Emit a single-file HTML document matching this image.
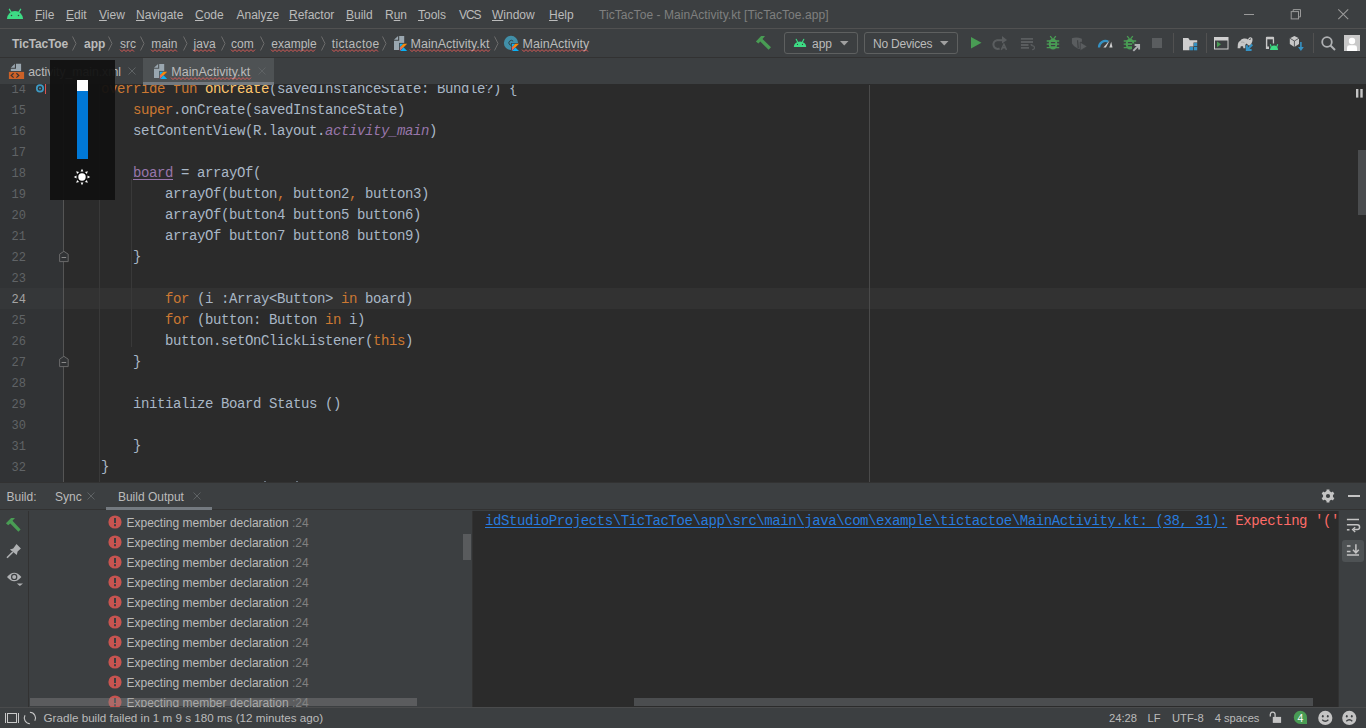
<!DOCTYPE html><html><head><meta charset="utf-8"><style>
*{margin:0;padding:0;box-sizing:border-box}
html,body{width:1366px;height:728px;overflow:hidden;background:#3c3f41;font-family:"Liberation Sans",sans-serif;font-size:12px;color:#bbbbbb}
.a{position:absolute;white-space:nowrap}
.m{position:absolute;white-space:pre;font-family:"Liberation Mono",monospace;font-size:14px;letter-spacing:-0.4px;line-height:21px;color:#a9b7c6}
.u{text-decoration:underline;text-underline-offset:1px}
.w{text-decoration:underline wavy #bc3f3c;text-decoration-thickness:1px;text-underline-offset:2px;text-decoration-skip-ink:none}
.kw{color:#cc7832}.fn{color:#ffc66d}.pr{color:#9876aa}
.ln{position:absolute;left:0;width:26px;text-align:right;font-family:"Liberation Mono",monospace;font-size:12px;line-height:21px;color:#606366}
.chev{position:absolute;top:37px}
svg{position:absolute;overflow:visible}
</style></head><body>
<div class="a" style="left:0;top:0;width:1366px;height:28px;background:#3c3f41"></div>
<div class="a" style="left:0;top:28px;width:1366px;height:1px;background:#515151"></div>
<svg style="left:0px;top:0px" width="30" height="28"><path d="M6.9 19 A8.1 7.9 0 0 1 23.1 19 Z" fill="#3ddc84"/><path d="M9.4 9.3 L11.2 12.4 M20.6 9.3 L18.8 12.4" stroke="#3ddc84" stroke-width="1.3" stroke-linecap="round"/><circle cx="11.5" cy="15.4" r="0.75" fill="#3c3f41"/><circle cx="18.5" cy="15.4" r="0.75" fill="#3c3f41"/></svg>
<div class="a" style="left:35px;top:1px;line-height:29px;"><span class="u">F</span>ile</div>
<div class="a" style="left:66px;top:1px;line-height:29px;"><span class="u">E</span>dit</div>
<div class="a" style="left:99px;top:1px;line-height:29px;"><span class="u">V</span>iew</div>
<div class="a" style="left:136px;top:1px;line-height:29px;"><span class="u">N</span>avigate</div>
<div class="a" style="left:195px;top:1px;line-height:29px;"><span class="u">C</span>ode</div>
<div class="a" style="left:236.5px;top:1px;line-height:29px;">Analy<span class="u">z</span>e</div>
<div class="a" style="left:289px;top:1px;line-height:29px;"><span class="u">R</span>efactor</div>
<div class="a" style="left:346px;top:1px;line-height:29px;"><span class="u">B</span>uild</div>
<div class="a" style="left:385px;top:1px;line-height:29px;">R<span class="u">u</span>n</div>
<div class="a" style="left:418px;top:1px;line-height:29px;"><span class="u">T</span>ools</div>
<div class="a" style="left:459px;top:1px;line-height:29px;letter-spacing:-1.1px;">VCS</div>
<div class="a" style="left:492px;top:1px;line-height:29px;"><span class="u">W</span>indow</div>
<div class="a" style="left:549px;top:1px;line-height:29px;"><span class="u">H</span>elp</div>
<div class="a" style="left:599px;top:1px;line-height:29px;color:#7f7f7f;letter-spacing:0.06px">TicTacToe - MainActivity.kt [TicTacToe.app]</div>
<div class="a" style="left:1244px;top:14px;width:10px;height:1px;background:#9a9a9a"></div>
<svg style="left:1290px;top:9px" width="12" height="11"><rect x="1.2" y="2.6" width="7.3" height="7.3" fill="none" stroke="#9a9a9a"/><path d="M3.2 2.6 V0.6 H10.5 V7.9 H8.5" fill="none" stroke="#9a9a9a"/></svg>
<svg style="left:1338px;top:9px" width="11" height="11"><path d="M0.3 0.3 L10.2 10.2 M10.2 0.3 L0.3 10.2" stroke="#9a9a9a" stroke-width="1.05"/></svg>
<div class="a" style="left:0;top:29px;width:1366px;height:28px;background:#3c3f41"></div>
<div class="a" style="left:0;top:57px;width:1366px;height:1px;background:#323232"></div>
<div class="a" style="left:12px;top:30px;line-height:29px;font-weight:bold;letter-spacing:-0.15px;">TicTacToe</div>
<div class="a" style="left:84px;top:30px;line-height:29px;font-weight:bold;">app</div>
<div class="a" style="left:120px;top:30px;line-height:29px;">src</div>
<div class="a" style="left:151.3px;top:30px;line-height:29px;">main</div>
<div class="a" style="left:193.6px;top:30px;line-height:29px;">java</div>
<div class="a" style="left:231px;top:30px;line-height:29px;">com</div>
<div class="a" style="left:271.3px;top:30px;line-height:29px;">example</div>
<div class="a" style="left:331.8px;top:30px;line-height:29px;letter-spacing:0.35px;">tictactoe</div>
<svg style="left:72px;top:36px" width="5" height="15"><path d="M0.5 0.5 L4 7.5 L0.5 14.5" fill="none" stroke="#6b6b6b" stroke-width="1"/></svg>
<svg style="left:108px;top:36px" width="5" height="15"><path d="M0.5 0.5 L4 7.5 L0.5 14.5" fill="none" stroke="#6b6b6b" stroke-width="1"/></svg>
<svg style="left:139.5px;top:36px" width="5" height="15"><path d="M0.5 0.5 L4 7.5 L0.5 14.5" fill="none" stroke="#6b6b6b" stroke-width="1"/></svg>
<svg style="left:182.5px;top:36px" width="5" height="15"><path d="M0.5 0.5 L4 7.5 L0.5 14.5" fill="none" stroke="#6b6b6b" stroke-width="1"/></svg>
<svg style="left:220.5px;top:36px" width="5" height="15"><path d="M0.5 0.5 L4 7.5 L0.5 14.5" fill="none" stroke="#6b6b6b" stroke-width="1"/></svg>
<svg style="left:259.5px;top:36px" width="5" height="15"><path d="M0.5 0.5 L4 7.5 L0.5 14.5" fill="none" stroke="#6b6b6b" stroke-width="1"/></svg>
<svg style="left:320.5px;top:36px" width="5" height="15"><path d="M0.5 0.5 L4 7.5 L0.5 14.5" fill="none" stroke="#6b6b6b" stroke-width="1"/></svg>
<svg style="left:381.5px;top:36px" width="5" height="15"><path d="M0.5 0.5 L4 7.5 L0.5 14.5" fill="none" stroke="#6b6b6b" stroke-width="1"/></svg>
<svg style="left:120px;top:48.5px" width="15.0" height="4"><polyline points="0.0 0.6 2.0 2.6 4.0 0.6 6.0 2.6 8.0 0.6 10.0 2.6 12.0 0.6 14.0 2.6" fill="none" stroke="#d95b58" stroke-width="1"/></svg>
<svg style="left:151px;top:48.5px" width="27.0" height="4"><polyline points="0.0 0.6 2.0 2.6 4.0 0.6 6.0 2.6 8.0 0.6 10.0 2.6 12.0 0.6 14.0 2.6 16.0 0.6 18.0 2.6 20.0 0.6 22.0 2.6 24.0 0.6 26.0 2.6" fill="none" stroke="#d95b58" stroke-width="1"/></svg>
<svg style="left:193px;top:48.5px" width="22.0" height="4"><polyline points="0.0 0.6 2.0 2.6 4.0 0.6 6.0 2.6 8.0 0.6 10.0 2.6 12.0 0.6 14.0 2.6 16.0 0.6 18.0 2.6 20.0 0.6 22.0 2.6" fill="none" stroke="#d95b58" stroke-width="1"/></svg>
<svg style="left:231px;top:48.5px" width="24.0" height="4"><polyline points="0.0 0.6 2.0 2.6 4.0 0.6 6.0 2.6 8.0 0.6 10.0 2.6 12.0 0.6 14.0 2.6 16.0 0.6 18.0 2.6 20.0 0.6 22.0 2.6 24.0 0.6" fill="none" stroke="#d95b58" stroke-width="1"/></svg>
<svg style="left:271px;top:48.5px" width="45.0" height="4"><polyline points="0.0 0.6 2.0 2.6 4.0 0.6 6.0 2.6 8.0 0.6 10.0 2.6 12.0 0.6 14.0 2.6 16.0 0.6 18.0 2.6 20.0 0.6 22.0 2.6 24.0 0.6 26.0 2.6 28.0 0.6 30.0 2.6 32.0 0.6 34.0 2.6 36.0 0.6 38.0 2.6 40.0 0.6 42.0 2.6 44.0 0.6" fill="none" stroke="#d95b58" stroke-width="1"/></svg>
<svg style="left:332px;top:48.5px" width="46.0" height="4"><polyline points="0.0 0.6 2.0 2.6 4.0 0.6 6.0 2.6 8.0 0.6 10.0 2.6 12.0 0.6 14.0 2.6 16.0 0.6 18.0 2.6 20.0 0.6 22.0 2.6 24.0 0.6 26.0 2.6 28.0 0.6 30.0 2.6 32.0 0.6 34.0 2.6 36.0 0.6 38.0 2.6 40.0 0.6 42.0 2.6 44.0 0.6 46.0 2.6" fill="none" stroke="#d95b58" stroke-width="1"/></svg>
<svg style="left:493.5px;top:36px" width="5" height="15"><path d="M0.5 0.5 L4 7.5 L0.5 14.5" fill="none" stroke="#6b6b6b" stroke-width="1"/></svg>
<svg style="left:391.7px;top:33.7px" width="18" height="19" viewBox="-2 -2 18 19"><path d="M0 3.7 L4.1 0 V3.7 Z" fill="#9aa7b0"/><path d="M5.2 0 H10.2 V7.7 H5.9 V14.1 H0 V4.8 H5.2 Z" fill="#9aa7b0"/><rect x="5.1000000000000005" y="6.9" width="8.9" height="8.9" fill="#3c3f41"/><defs><linearGradient id="kg46" x1="1" y1="0" x2="0" y2="1"><stop offset="0.45" stop-color="#f88909"/><stop offset="1" stop-color="#d44fa0"/></linearGradient></defs><path d="M5.9 7.7 H9.55 L5.9 11.35 Z" fill="#0ab1f5"/><path d="M9.55 7.7 H13.2 L5.9 15.0 V11.35 Z" fill="url(#kg46)"/><path d="M6.265000000000001 15.0 H13.2 L9.55 11.35 Z" fill="#0ab1f5"/></svg>
<div class="a" style="left:410.6px;top:30px;line-height:29px;font-size:12.5px">MainActivity.kt</div>
<svg style="left:410px;top:48.5px" width="80.0" height="4"><polyline points="0.0 0.6 2.0 2.6 4.0 0.6 6.0 2.6 8.0 0.6 10.0 2.6 12.0 0.6 14.0 2.6 16.0 0.6 18.0 2.6 20.0 0.6 22.0 2.6 24.0 0.6 26.0 2.6 28.0 0.6 30.0 2.6 32.0 0.6 34.0 2.6 36.0 0.6 38.0 2.6 40.0 0.6 42.0 2.6 44.0 0.6 46.0 2.6 48.0 0.6 50.0 2.6 52.0 0.6 54.0 2.6 56.0 0.6 58.0 2.6 60.0 0.6 62.0 2.6 64.0 0.6 66.0 2.6 68.0 0.6 70.0 2.6 72.0 0.6 74.0 2.6 76.0 0.6 78.0 2.6 80.0 0.6" fill="none" stroke="#d95b58" stroke-width="1"/></svg>
<svg style="left:500px;top:32px" width="24" height="22" viewBox="0 0 24 22"><circle cx="11" cy="10.9" r="7.1" fill="#418fa8"/><path d="M13.2 9.2 A2.5 2.5 0 1 0 13.2 12.6" fill="none" stroke="#2b3a40" stroke-width="0.9"/><rect x="11.0" y="11.0" width="8.8" height="8.8" fill="#3c3f41"/><defs><linearGradient id="kg49" x1="1" y1="0" x2="0" y2="1"><stop offset="0.45" stop-color="#f88909"/><stop offset="1" stop-color="#d44fa0"/></linearGradient></defs><path d="M11.8 11.8 H15.4 L11.8 15.4 Z" fill="#0ab1f5"/><path d="M15.4 11.8 H19.0 L11.8 19.0 V15.4 Z" fill="url(#kg49)"/><path d="M12.16 19.0 H19.0 L15.4 15.4 Z" fill="#0ab1f5"/></svg>
<div class="a" style="left:522.6px;top:30px;line-height:29px;font-size:12.5px">MainActivity</div>
<svg style="left:522px;top:48.5px" width="67.0" height="4"><polyline points="0.0 0.6 2.0 2.6 4.0 0.6 6.0 2.6 8.0 0.6 10.0 2.6 12.0 0.6 14.0 2.6 16.0 0.6 18.0 2.6 20.0 0.6 22.0 2.6 24.0 0.6 26.0 2.6 28.0 0.6 30.0 2.6 32.0 0.6 34.0 2.6 36.0 0.6 38.0 2.6 40.0 0.6 42.0 2.6 44.0 0.6 46.0 2.6 48.0 0.6 50.0 2.6 52.0 0.6 54.0 2.6 56.0 0.6 58.0 2.6 60.0 0.6 62.0 2.6 64.0 0.6 66.0 2.6" fill="none" stroke="#d95b58" stroke-width="1"/></svg>
<svg style="left:750px;top:30px" width="30" height="26"><path d="M5.9 11.4 L11.1 5.9 L15 6.1 L12.5 9 L21 17.3 L18.6 19.8 L10.3 11.5 L8.4 13.4 Z" fill="#499c54"/></svg>
<div class="a" style="left:783.5px;top:32px;width:74px;height:22px;border:1px solid #5e6060;border-radius:3px"></div>
<svg style="left:785px;top:30px" width="30" height="26"><path d="M793.8 47 A6.2 5.6 0 0 1 806.2 47 Z" transform="translate(-785,-30)" fill="#3ddc84"/><path d="M796.2 39.3 L797.6 42 M803.8 39.3 L802.4 42" transform="translate(-785,-30)" stroke="#3ddc84" stroke-width="1.1" stroke-linecap="round"/><circle cx="797.5" cy="44.4" r="0.6" transform="translate(-785,-30)" fill="#3c3f41"/><circle cx="802.5" cy="44.4" r="0.6" transform="translate(-785,-30)" fill="#3c3f41"/></svg>
<div class="a" style="left:812px;top:30px;line-height:29px;font-size:12px">app</div>
<svg style="left:840px;top:41px" width="9" height="5"><path d="M0 0 H8.5 L4.25 4.5 Z" fill="#a0a0a0"/></svg>
<div class="a" style="left:864px;top:32px;width:94px;height:22px;border:1px solid #5e6060;border-radius:3px"></div>
<div class="a" style="left:873px;top:30px;line-height:29px;letter-spacing:-0.2px">No Devices</div>
<svg style="left:940px;top:41px" width="9" height="5"><path d="M0 0 H8.5 L4.25 4.5 Z" fill="#a0a0a0"/></svg>
<svg style="left:971px;top:37px" width="11" height="12"><path d="M0 0 L10.5 5.8 L0 11.6 Z" fill="#499c54"/></svg>
<svg style="left:990px;top:34px" width="20" height="18"><path d="M6.8 6.2 A4.4 4.4 0 1 0 9.6 14.5" fill="none" stroke="#5a5d5f" stroke-width="2"/><path d="M12 1.9 L17 6 L12 9.5 Z" fill="#5a5d5f"/><path d="M6.5 6.2 H12.5" stroke="#5a5d5f" stroke-width="2"/><path d="M11.3 15.9 L13.9 10.3 L16.5 15.9 M12.3 13.8 H15.5" fill="none" stroke="#5a5d5f" stroke-width="1.5"/></svg>
<svg style="left:1019px;top:35px" width="18" height="17"><path d="M1.9 3.8 H14 M1.9 7 H14 M1.9 10 H9.5 M1.9 12.9 H10" stroke="#5a5d5f" stroke-width="1.8"/><path d="M12.5 10.5 Q15.5 10.5 15.5 12.8 Q15.5 14.6 13.2 14.6" fill="none" stroke="#5a5d5f" stroke-width="1.1"/><path d="M11 9.8 L13.3 8.8 L13.3 11.6 Z" fill="#5a5d5f"/></svg>
<svg style="left:1046px;top:35px" width="18" height="17" viewBox="0 0 18 17"><path d="M4.2 1.1 L6.4 3.9 M9.8 1.1 L7.6 3.9" stroke="#499c54" stroke-width="1.3"/><ellipse cx="7" cy="9" rx="4.3" ry="5.6" fill="#499c54"/><path d="M0.7 6 H13.2 M0.7 9.1 H13.2 M0.7 12.6 H13.2" stroke="#499c54" stroke-width="1.4"/><path d="M4.9 7.6 H9.2 M4.9 10.6 H9.2" stroke="#3c3f41" stroke-width="1.1"/></svg>
<svg style="left:1070px;top:35px" width="18" height="17"><path d="M1.9 3.2 Q6.9 1.7 11.9 3.8 V6.7 L10.4 7 V14.3 Q5.1 13.2 1.9 8.5 Z" fill="#5a5d5f"/><path d="M7.6 5.2 L8.2 13" stroke="#3c3f41" stroke-width="1.1"/><path d="M10.2 7.1 L17.2 11.4 L10.2 15.7 Z" fill="#5a5d5f" stroke="#3c3f41" stroke-width="0.7"/></svg>
<svg style="left:1095px;top:36px" width="20" height="14" viewBox="0 0 20 14"><path d="M4 11.5 A6.5 6.5 0 0 1 13.2 5.6" fill="none" stroke="#3592c4" stroke-width="2.3"/><path d="M8.4 11.5 L10.9 11.5 L14.8 4.3 Z" fill="#d0d0d0"/><path d="M14.3 11.5 L17.5 11.5 L16.2 5.8 Z" fill="#d0d0d0"/></svg>
<svg style="left:1123px;top:35px" width="18" height="17" viewBox="0 0 18 17"><path d="M4.2 1.1 L6.4 3.9 M9.8 1.1 L7.6 3.9" stroke="#499c54" stroke-width="1.3"/><ellipse cx="7" cy="9" rx="4.3" ry="5.6" fill="#499c54"/><path d="M0.7 6 H13.2 M0.7 9.1 H13.2 M0.7 12.6 H13.2" stroke="#499c54" stroke-width="1.4"/><path d="M4.9 7.6 H9.2 M4.9 10.6 H9.2" stroke="#3c3f41" stroke-width="1.1"/><rect x="9" y="8.5" width="9" height="9" fill="#3c3f41"/><path d="M10.3 15.8 L15.6 10.5 M11.6 10 H16.1 V14.5" fill="none" stroke="#afb1b3" stroke-width="1.9"/></svg>
<div class="a" style="left:1152px;top:38px;width:10px;height:10px;background:#5a5d5f"></div>
<div class="a" style="left:1173px;top:33px;width:1px;height:20px;background:#515151"></div>
<div class="a" style="left:1206px;top:33px;width:1px;height:20px;background:#515151"></div>
<div class="a" style="left:1313px;top:33px;width:1px;height:20px;background:#515151"></div>
<svg style="left:1183px;top:38px" width="15" height="13" viewBox="0 0 15 13"><path d="M0 0 H5.3 L6.8 2.2 H14.2 V4.4 H10.5 V8.6 H6.5 V12.3 H0 Z" fill="#cfcfcf"/><rect x="10.9" y="4.9" width="3.3" height="3.3" fill="#3592c4"/><rect x="6.8" y="9" width="3.3" height="3.3" fill="#3592c4"/><rect x="10.9" y="9" width="3.3" height="3.3" fill="#3592c4"/></svg>
<svg style="left:1214px;top:37px" width="15" height="13" viewBox="0 0 15 13"><rect x="0.5" y="0.5" width="13.5" height="11.5" fill="none" stroke="#cfcfcf"/><rect x="0.5" y="0.5" width="13.5" height="3" fill="#cfcfcf"/><path d="M3 4.4 L7 7.3 L3 10.2 Z" fill="#499c54"/></svg>
<svg style="left:1234px;top:33px" width="22" height="20"><path d="M3.6 15.2 L3.9 11 Q4.3 8.5 6.3 7.8 Q7.2 6 9.8 5.6 Q12.5 5.3 14 6.6 Q14.6 4.6 16 4.2 Q18 3.9 18.5 5.8 Q18.8 8 17.6 10.2 L16 12.4 L14.3 12.3 L12.6 10.4 L11.3 11.8 V15.3 H9.4 L9 13.3 H6.8 L6.3 15.3 Z" fill="#c8c8c8"/><path d="M15.2 6.8 Q16 5.3 17 6.2" fill="none" stroke="#3c3f41" stroke-width="0.9"/><path d="M7 9.2 Q9 8.6 10.5 9.8" fill="none" stroke="#9a9a9a" stroke-width="0.7"/><path d="M11.8 12.2 H13.9 V14.4 L17.5 10.8 L19 12.3 L15.4 15.9 H17.6 V17.9 H11.8 Z" fill="#3592c4"/></svg>
<svg style="left:1260px;top:33px" width="22" height="20"><path d="M6.9 3.8 H13.1 Q14.1 3.8 14.1 4.8 V15.9 H5.9 V4.8 Q5.9 3.8 6.9 3.8 Z" fill="#c8c8c8"/><rect x="7.3" y="6.3" width="5.5" height="7.2" fill="#3c3f41"/><rect x="9" y="10.5" width="10" height="8" fill="#3c3f41"/><path d="M9.9 17 Q10.3 12.6 14 12.6 Q17.7 12.6 18.1 17 Z" fill="#3ddc84"/><path d="M11.2 13.8 L10.3 11.2 M16.8 13.8 L17.7 11.2" stroke="#3ddc84" stroke-width="1.1"/></svg>
<svg style="left:1288px;top:35px" width="18" height="17"><path d="M6.4 1.1 L11 3.2 V8.9 L6.4 11.9 L1.8 8.9 V3.2 Z" fill="#c8c8c8"/><path d="M6.4 6 V11.9 M1.8 3.2 L6.4 6 L11 3.2" stroke="#3c3f41" stroke-width="0.8" fill="none"/><path d="M13.6 6.5 H11.9 V11.9 H9 L12.8 15.9 L16.6 11.9 H13.7 Z" fill="#3c3f41"/><path d="M12.9 7 V12" stroke="#3592c4" stroke-width="1.6"/><path d="M10 12 L12.9 15.9 L15.8 12 Z" fill="#3592c4"/></svg>
<svg style="left:1321px;top:36px" width="15" height="15" viewBox="0 0 15 15"><circle cx="6" cy="6" r="4.8" fill="none" stroke="#afb1b3" stroke-width="1.8"/><path d="M9.5 9.5 L14 14" stroke="#afb1b3" stroke-width="2"/></svg>
<svg style="left:1344px;top:35px" width="16" height="16" viewBox="0 0 16 16"><rect width="16" height="16" fill="#c9c9c9"/><circle cx="8" cy="6" r="3.2" fill="#fff"/><path d="M3 16 V12.5 Q3 10.2 5.5 10.2 H10.5 Q13 10.2 13 12.5 V16 Z" fill="#fff"/></svg>
<div class="a" style="left:0;top:58px;width:1366px;height:26px;background:#3c3f41"></div>
<div class="a" style="left:143px;top:58px;width:131px;height:26px;background:#4e5254"></div>
<svg style="left:4px;top:60px" width="24" height="22" viewBox="0 0 24 22"><path d="M6.8 7.7 L10.9 3.8 V7.7 Z" fill="#9aa7b0"/><path d="M12 3.8 H17.1 V10.9 H6.8 V8.8 H12 Z" fill="#9aa7b0"/><rect x="4.9" y="11.9" width="15.2" height="7.1" fill="#cc6127"/><path d="M9.6 13.2 L7.2 15.4 L9.6 17.6 M12.4 13.2 L14.8 15.4 L12.4 17.6" fill="none" stroke="#3a3230" stroke-width="1.2"/></svg>
<div class="a" style="left:28.3px;top:59px;line-height:27px;font-size:12.2px">activity_main.xml</div>
<svg style="left:128px;top:67px" width="8" height="8"><path d="M0.5 0.5 L7.5 7.5 M7.5 0.5 L0.5 7.5" stroke="#5e6264" stroke-width="1"/></svg>
<svg style="left:151.9px;top:61.9px" width="18" height="19" viewBox="-2 -2 18 19"><path d="M0 3.7 L4.1 0 V3.7 Z" fill="#9aa7b0"/><path d="M5.2 0 H10.2 V7.7 H5.9 V14.1 H0 V4.8 H5.2 Z" fill="#9aa7b0"/><rect x="5.1000000000000005" y="6.9" width="8.9" height="8.9" fill="#4e5254"/><defs><linearGradient id="kg83" x1="1" y1="0" x2="0" y2="1"><stop offset="0.45" stop-color="#f88909"/><stop offset="1" stop-color="#d44fa0"/></linearGradient></defs><path d="M5.9 7.7 H9.55 L5.9 11.35 Z" fill="#0ab1f5"/><path d="M9.55 7.7 H13.2 L5.9 15.0 V11.35 Z" fill="url(#kg83)"/><path d="M6.265000000000001 15.0 H13.2 L9.55 11.35 Z" fill="#0ab1f5"/></svg>
<div class="a" style="left:171.3px;top:59px;line-height:27px;font-size:12.5px">MainActivity.kt</div>
<svg style="left:171px;top:76.5px" width="80.0" height="4"><polyline points="0.0 0.6 2.0 2.6 4.0 0.6 6.0 2.6 8.0 0.6 10.0 2.6 12.0 0.6 14.0 2.6 16.0 0.6 18.0 2.6 20.0 0.6 22.0 2.6 24.0 0.6 26.0 2.6 28.0 0.6 30.0 2.6 32.0 0.6 34.0 2.6 36.0 0.6 38.0 2.6 40.0 0.6 42.0 2.6 44.0 0.6 46.0 2.6 48.0 0.6 50.0 2.6 52.0 0.6 54.0 2.6 56.0 0.6 58.0 2.6 60.0 0.6 62.0 2.6 64.0 0.6 66.0 2.6 68.0 0.6 70.0 2.6 72.0 0.6 74.0 2.6 76.0 0.6 78.0 2.6 80.0 0.6" fill="none" stroke="#d95b58" stroke-width="1"/></svg>
<svg style="left:258px;top:67px" width="8" height="8"><path d="M0.5 0.5 L7.5 7.5 M7.5 0.5 L0.5 7.5" stroke="#5e6264" stroke-width="1"/></svg>
<div class="a" style="left:0;top:84px;width:1366px;height:398px;background:#2b2b2b;overflow:hidden" id="ed">
<div class="a" style="left:0;top:0;width:63px;height:398px;background:#313335"></div>
<div class="a" style="left:0;top:204px;width:63px;height:21px;background:#353739"></div>
<div class="a" style="left:64px;top:204px;width:1302px;height:21px;background:#323232"></div>
<div class="a" style="left:63px;top:0;width:1px;height:398px;background:#555555"></div>
<div class="a" style="left:99px;top:0;width:1px;height:398px;background:#393939"></div>
<div class="a" style="left:131px;top:95px;width:1px;height:84px;background:#393939"></div>
<div class="a" style="left:131px;top:179px;width:1px;height:84px;background:#393939"></div>
<div class="a" style="left:869px;top:0;width:1px;height:398px;background:#4a4a4a"></div>
<div class="ln" style="top:-4px;color:#606366">14</div>
<div class="m" style="left:69px;top:-5px">    <span class="kw" style="">override fun </span><span class="fn" style="">onCreate</span>(savedInstanceState: Bundle?) {</div>
<div class="ln" style="top:17px;color:#606366">15</div>
<div class="m" style="left:69px;top:16px">        <span class="kw" style="">super</span>.onCreate(savedInstanceState)</div>
<div class="ln" style="top:38px;color:#606366">16</div>
<div class="m" style="left:69px;top:37px">        setContentView(R.layout.<span class="pr" style="font-style:italic;">activity_main</span>)</div>
<div class="ln" style="top:59px;color:#606366">17</div>
<div class="ln" style="top:80px;color:#606366">18</div>
<div class="m" style="left:69px;top:79px">        <span class="pr" style="text-decoration:underline;text-underline-offset:2px;">board</span> = arrayOf(</div>
<div class="ln" style="top:101px;color:#606366">19</div>
<div class="m" style="left:69px;top:100px">            arrayOf(button<span class="kw" style="">,</span> button2<span class="kw" style="">,</span> button3)</div>
<div class="ln" style="top:122px;color:#606366">20</div>
<div class="m" style="left:69px;top:121px">            arrayOf(button4 button5 button6)</div>
<div class="ln" style="top:143px;color:#606366">21</div>
<div class="m" style="left:69px;top:142px">            arrayOf button7 button8 button9)</div>
<div class="ln" style="top:164px;color:#606366">22</div>
<div class="m" style="left:69px;top:163px">        }</div>
<div class="ln" style="top:185px;color:#606366">23</div>
<div class="ln" style="top:206px;color:#a4a3a3">24</div>
<div class="m" style="left:69px;top:205px">            <span class="kw" style="">for</span> (i :Array&lt;Button&gt; <span class="kw" style="">in</span> board)</div>
<div class="ln" style="top:227px;color:#606366">25</div>
<div class="m" style="left:69px;top:226px">            <span class="kw" style="">for</span> (button: Button <span class="kw" style="">in</span> i)</div>
<div class="ln" style="top:248px;color:#606366">26</div>
<div class="m" style="left:69px;top:247px">            button.setOnClickListener(<span class="kw" style="">this</span>)</div>
<div class="ln" style="top:269px;color:#606366">27</div>
<div class="m" style="left:69px;top:268px">        }</div>
<div class="ln" style="top:290px;color:#606366">28</div>
<div class="ln" style="top:311px;color:#606366">29</div>
<div class="m" style="left:69px;top:310px">        initialize Board Status ()</div>
<div class="ln" style="top:332px;color:#606366">30</div>
<div class="ln" style="top:353px;color:#606366">31</div>
<div class="m" style="left:69px;top:352px">        }</div>
<div class="ln" style="top:374px;color:#606366">32</div>
<div class="m" style="left:69px;top:373px">    }</div>
<svg style="left:58.5px;top:166px" width="11" height="13"><path d="M0.6 4.2 L4.9 1.3 L9.2 4.2 V11.6 H0.6 Z" fill="#313335" stroke="#6b6b6b" stroke-width="1"/><path d="M2.6 7.5 H7.2" stroke="#8a8a8a" stroke-width="1"/></svg>
<svg style="left:58.5px;top:271px" width="11" height="13"><path d="M0.6 4.2 L4.9 1.3 L9.2 4.2 V11.6 H0.6 Z" fill="#313335" stroke="#6b6b6b" stroke-width="1"/><path d="M2.6 7.5 H7.2" stroke="#8a8a8a" stroke-width="1"/></svg>
<div class="a" style="left:0;top:0;width:63px;height:1px;background:#313335"></div>
<div class="a" style="left:64px;top:0;width:1302px;height:1px;background:#2b2b2b"></div>
<svg style="left:34px;top:-2px" width="12" height="12"><circle cx="6" cy="6.4" r="3.2" fill="none" stroke="#3d9ac4" stroke-width="1.7"/><circle cx="6" cy="6.4" r="0.9" fill="#3d9ac4"/></svg>
<div class="a" style="left:45px;top:0;width:1.2px;height:10px;background:#d9534f"></div>
<div class="a" style="left:1358px;top:66px;width:8px;height:65px;background:#4a4c4e"></div>
<svg style="left:1356px;top:5px" width="8" height="9"><rect x="0" y="0" width="2.4" height="8.6" fill="#c4c4c4"/><rect x="4.3" y="0" width="2.4" height="8.6" fill="#c4c4c4"/></svg>
</div>
<div class="a" style="left:264px;top:481px;width:2px;height:1px;background:#6a7580"></div>
<div class="a" style="left:296px;top:481px;width:2px;height:1px;background:#6a7580"></div>
<div class="a" style="left:0;top:482px;width:1366px;height:1px;background:#323232"></div>
<div class="a" style="left:143px;top:82px;width:131px;height:3px;background:#747a80"></div>
<div class="a" style="left:0;top:483px;width:1366px;height:27px;background:#3c3f41"></div>
<div class="a" style="left:0;top:509px;width:1366px;height:1px;background:#323232"></div>
<div class="a" style="left:6.5px;top:484px;line-height:27px">Build:</div>
<div class="a" style="left:55px;top:484px;line-height:27px">Sync</div>
<svg style="left:87px;top:492px" width="8" height="8"><path d="M0.5 0.5 L7.5 7.5 M7.5 0.5 L0.5 7.5" stroke="#5e6264" stroke-width="1"/></svg>
<div class="a" style="left:117.9px;top:484px;line-height:27px">Build Output</div>
<svg style="left:193px;top:492px" width="8" height="8"><path d="M0.5 0.5 L7.5 7.5 M7.5 0.5 L0.5 7.5" stroke="#5e6264" stroke-width="1"/></svg>
<div class="a" style="left:106px;top:507px;width:106px;height:3px;background:#747a80"></div>
<svg style="left:1321px;top:489px" width="14" height="14" viewBox="0 0 14 14"><path d="M4.65 2.93 L5.55 2.32 L5.54 0.46 L8.46 0.46 L8.45 2.32 L9.35 2.93 L10.33 3.41 L11.93 2.46 L13.39 5.00 L11.78 5.91 L11.70 7.00 L11.78 8.09 L13.39 9.00 L11.93 11.54 L10.33 10.59 L9.35 11.07 L8.45 11.68 L8.46 13.54 L5.54 13.54 L5.55 11.68 L4.65 11.07 L3.67 10.59 L2.07 11.54 L0.61 9.00 L2.22 8.09 L2.30 7.00 L2.22 5.91 L0.61 5.00 L2.07 2.46 L3.67 3.41 Z" fill="#c4c4c4"/><circle cx="7" cy="7" r="4.9" fill="#c4c4c4"/><circle cx="7" cy="7" r="2.1" fill="#3c3f41"/></svg>
<div class="a" style="left:1348px;top:495px;width:12px;height:2px;background:#c4c4c4"></div>
<div class="a" style="left:28px;top:511px;width:1px;height:196px;background:#323232"></div>
<svg style="left:0px;top:512px" width="30" height="26"><path d="M5.9 11.2 L11.1 5.9 L15 6.1 L12.5 8.8 L20.6 17.4 L18.4 19.7 L10.3 11.4 L8.2 13.2 Z" fill="#499c54"/></svg>
<svg style="left:0px;top:540px" width="30" height="22"><path d="M16.5 3.9 L20.9 8.6 L17.6 11.6 L16.8 15 L9.9 9.4 L13.2 8.4 Z" fill="#afb1b3"/><path d="M12.8 12 L7 17.8" stroke="#afb1b3" stroke-width="1.6"/></svg>
<svg style="left:0px;top:566px" width="30" height="24"><path d="M7 11 Q14.2 2.5 21.4 11 Q14.2 19.5 7 11 Z" fill="#afb1b3"/><circle cx="14.2" cy="10.9" r="3.2" fill="#3c3f41"/><circle cx="14.2" cy="10.9" r="2" fill="#afb1b3"/><path d="M16.8 17.4 H23 L19.9 19.9 Z" fill="#afb1b3"/></svg>
<svg style="left:108px;top:515px" width="14" height="14" viewBox="0 0 14 14"><circle cx="7" cy="7" r="6.6" fill="#c75450"/><rect x="6" y="3" width="2" height="5" fill="#3c3f41"/><rect x="6" y="9.2" width="2" height="2" fill="#3c3f41"/></svg>
<div class="a" style="left:126.5px;top:513px;line-height:21px">Expecting member declaration <span style="color:#808080">:24</span></div>
<svg style="left:108px;top:535px" width="14" height="14" viewBox="0 0 14 14"><circle cx="7" cy="7" r="6.6" fill="#c75450"/><rect x="6" y="3" width="2" height="5" fill="#3c3f41"/><rect x="6" y="9.2" width="2" height="2" fill="#3c3f41"/></svg>
<div class="a" style="left:126.5px;top:533px;line-height:21px">Expecting member declaration <span style="color:#808080">:24</span></div>
<svg style="left:108px;top:555px" width="14" height="14" viewBox="0 0 14 14"><circle cx="7" cy="7" r="6.6" fill="#c75450"/><rect x="6" y="3" width="2" height="5" fill="#3c3f41"/><rect x="6" y="9.2" width="2" height="2" fill="#3c3f41"/></svg>
<div class="a" style="left:126.5px;top:553px;line-height:21px">Expecting member declaration <span style="color:#808080">:24</span></div>
<svg style="left:108px;top:575px" width="14" height="14" viewBox="0 0 14 14"><circle cx="7" cy="7" r="6.6" fill="#c75450"/><rect x="6" y="3" width="2" height="5" fill="#3c3f41"/><rect x="6" y="9.2" width="2" height="2" fill="#3c3f41"/></svg>
<div class="a" style="left:126.5px;top:573px;line-height:21px">Expecting member declaration <span style="color:#808080">:24</span></div>
<svg style="left:108px;top:595px" width="14" height="14" viewBox="0 0 14 14"><circle cx="7" cy="7" r="6.6" fill="#c75450"/><rect x="6" y="3" width="2" height="5" fill="#3c3f41"/><rect x="6" y="9.2" width="2" height="2" fill="#3c3f41"/></svg>
<div class="a" style="left:126.5px;top:593px;line-height:21px">Expecting member declaration <span style="color:#808080">:24</span></div>
<svg style="left:108px;top:615px" width="14" height="14" viewBox="0 0 14 14"><circle cx="7" cy="7" r="6.6" fill="#c75450"/><rect x="6" y="3" width="2" height="5" fill="#3c3f41"/><rect x="6" y="9.2" width="2" height="2" fill="#3c3f41"/></svg>
<div class="a" style="left:126.5px;top:613px;line-height:21px">Expecting member declaration <span style="color:#808080">:24</span></div>
<svg style="left:108px;top:635px" width="14" height="14" viewBox="0 0 14 14"><circle cx="7" cy="7" r="6.6" fill="#c75450"/><rect x="6" y="3" width="2" height="5" fill="#3c3f41"/><rect x="6" y="9.2" width="2" height="2" fill="#3c3f41"/></svg>
<div class="a" style="left:126.5px;top:633px;line-height:21px">Expecting member declaration <span style="color:#808080">:24</span></div>
<svg style="left:108px;top:655px" width="14" height="14" viewBox="0 0 14 14"><circle cx="7" cy="7" r="6.6" fill="#c75450"/><rect x="6" y="3" width="2" height="5" fill="#3c3f41"/><rect x="6" y="9.2" width="2" height="2" fill="#3c3f41"/></svg>
<div class="a" style="left:126.5px;top:653px;line-height:21px">Expecting member declaration <span style="color:#808080">:24</span></div>
<svg style="left:108px;top:675px" width="14" height="14" viewBox="0 0 14 14"><circle cx="7" cy="7" r="6.6" fill="#c75450"/><rect x="6" y="3" width="2" height="5" fill="#3c3f41"/><rect x="6" y="9.2" width="2" height="2" fill="#3c3f41"/></svg>
<div class="a" style="left:126.5px;top:673px;line-height:21px">Expecting member declaration <span style="color:#808080">:24</span></div>
<svg style="left:108px;top:695px" width="14" height="14" viewBox="0 0 14 14"><circle cx="7" cy="7" r="6.6" fill="#c75450"/><rect x="6" y="3" width="2" height="5" fill="#3c3f41"/><rect x="6" y="9.2" width="2" height="2" fill="#3c3f41"/></svg>
<div class="a" style="left:126.5px;top:693px;line-height:21px">Expecting member declaration <span style="color:#808080">:24</span></div>
<div class="a" style="left:463px;top:534px;width:8px;height:26px;background:#595b5d"></div>
<div class="a" style="left:30px;top:698px;width:387px;height:8px;background:rgba(138,138,138,0.4)"></div>
<div class="a" style="left:472px;top:511px;width:1px;height:196px;background:#323232"></div>
<div class="a" style="left:473px;top:511px;width:866px;height:196px;background:#2b2b2b"></div>
<div class="m" style="left:485px;top:511px;color:#287bde;letter-spacing:-0.42px"><span style="text-decoration:underline;text-underline-offset:2px">idStudioProjects\TicTacToe\app\src\main\java\com\example\tictactoe\MainActivity.kt: (38, 31):</span> <span style="color:#ff6b68">Expecting '('</span></div>
<div class="a" style="left:473px;top:707px;width:893px;height:1px;background:#323232"></div>
<div class="a" style="left:1338px;top:511px;width:1px;height:196px;background:#323232"></div>
<div class="a" style="left:1339px;top:511px;width:27px;height:196px;background:#3c3f41"></div>
<svg style="left:1345px;top:517px" width="17" height="16"><path d="M1.9 2.5 H14 M1.9 7.8 H12.2 Q14.6 7.8 14.6 10.2 Q14.6 12.5 12.2 12.5 H9" fill="none" stroke="#c4c4c4" stroke-width="1.5"/><path d="M1.9 12.8 H4.5" stroke="#c4c4c4" stroke-width="1.5"/><path d="M10.2 10.2 L7.6 12.6 L10.2 15" fill="none" stroke="#c4c4c4" stroke-width="1.4"/></svg>
<div class="a" style="left:1342px;top:540px;width:22px;height:22px;background:#4e5254;border-radius:3px"></div>
<svg style="left:1345px;top:542px" width="17" height="16"><path d="M1.9 4 H5.5 M1.9 9.4 H5.5 M1.9 12.9 H14" stroke="#c4c4c4" stroke-width="1.5"/><path d="M10.9 2.3 V10.5 M8 7.8 L10.9 10.8 L13.8 7.8" fill="none" stroke="#c4c4c4" stroke-width="1.5"/></svg>
<div class="a" style="left:634px;top:698px;width:679px;height:8px;background:#4b4d4f"></div>
<div class="a" style="left:0;top:707px;width:1366px;height:21px;background:#3c3f41"></div>
<div class="a" style="left:0;top:707px;width:1366px;height:1px;background:#4a4b4c"></div>
<svg style="left:0px;top:708px" width="40" height="20"><path d="M5.5 5 V15" stroke="#c8c8c8" stroke-width="1"/><rect x="7.5" y="5.5" width="9" height="9" fill="none" stroke="#c8c8c8" stroke-width="1"/><path d="M18.5 5 V15" stroke="#c8c8c8" stroke-width="1"/><path d="M29.9 4.3 A5.7 5.7 0 0 1 34.8 12.8 M29.9 15.7 A5.7 5.7 0 0 1 25 7.2" fill="none" stroke="#c8c8c8" stroke-width="1.1"/></svg>
<div class="a" style="left:43.5px;top:707px;line-height:22px;font-size:11.65px">Gradle build failed in 1 m 9 s 180 ms (12 minutes ago)</div>
<div class="a" style="left:1109px;top:707px;line-height:22px;font-size:11.2px">24:28</div>
<div class="a" style="left:1147.6px;top:707px;line-height:22px;font-size:11.2px">LF</div>
<div class="a" style="left:1172px;top:707px;line-height:22px;font-size:11.2px">UTF-8</div>
<div class="a" style="left:1214.7px;top:707px;line-height:22px;font-size:11.2px">4 spaces</div>
<svg style="left:1269px;top:711px" width="14" height="13" viewBox="0 0 14 13"><path d="M1.3 5.5 V3.6 A2.4 2.4 0 0 1 6.1 3.6 V6" fill="none" stroke="#c4c4c4" stroke-width="1.3"/><rect x="3.8" y="5.9" width="8.3" height="6" fill="#c4c4c4"/></svg>
<svg style="left:1293px;top:710px" width="16" height="16" viewBox="0 0 16 16"><path d="M7.4 0.8 A6.6 6.6 0 1 0 7.4 14 H14 V7.4 A6.6 6.6 0 0 0 7.4 0.8 Z" fill="#499c54"/><text x="7.4" y="11.5" text-anchor="middle" font-family="Liberation Sans" font-size="10.5" fill="#ffffff">4</text></svg>
<svg style="left:1318px;top:710px" width="15" height="16" viewBox="0 0 15 16"><circle cx="7.3" cy="7.9" r="7.1" fill="#c4c4c4"/><ellipse cx="4.8" cy="6.2" rx="0.9" ry="1.3" fill="#3c3f41"/><ellipse cx="9.8" cy="6.2" rx="0.9" ry="1.3" fill="#3c3f41"/><path d="M4.2 9.8 Q7.3 12.6 10.4 9.8" fill="none" stroke="#3c3f41" stroke-width="1.3"/></svg>
<svg style="left:1342px;top:710px" width="15" height="16" viewBox="0 0 15 16"><circle cx="7.3" cy="7.9" r="7.1" fill="#c4c4c4"/><ellipse cx="4.8" cy="6.2" rx="0.9" ry="1.3" fill="#3c3f41"/><ellipse cx="9.8" cy="6.2" rx="0.9" ry="1.3" fill="#3c3f41"/><path d="M4.3 11.3 Q7.3 8.3 10.3 11.3" fill="none" stroke="#3c3f41" stroke-width="1.3"/></svg>
<div class="a" style="left:50px;top:60px;width:65px;height:140px;background:rgba(17,17,17,0.95)"></div>
<div class="a" style="left:77px;top:80px;width:11px;height:11px;background:#ffffff"></div>
<div class="a" style="left:77px;top:91px;width:11px;height:68px;background:#0078d7"></div>
<svg style="left:74px;top:168.5px" width="16" height="16" viewBox="0 0 16 16"><circle cx="8" cy="8" r="3.7" fill="#fff"/><path d="M8.00 -0.20 L9.40 2.50 L6.60 2.50 Z" fill="#fff"/><path d="M13.80 2.20 L12.88 5.10 L10.90 3.12 Z" fill="#fff"/><path d="M16.20 8.00 L13.50 9.40 L13.50 6.60 Z" fill="#fff"/><path d="M13.80 13.80 L10.90 12.88 L12.88 10.90 Z" fill="#fff"/><path d="M8.00 16.20 L6.60 13.50 L9.40 13.50 Z" fill="#fff"/><path d="M2.20 13.80 L3.12 10.90 L5.10 12.88 Z" fill="#fff"/><path d="M-0.20 8.00 L2.50 6.60 L2.50 9.40 Z" fill="#fff"/><path d="M2.20 2.20 L5.10 3.12 L3.12 5.10 Z" fill="#fff"/></svg>
</body></html>
